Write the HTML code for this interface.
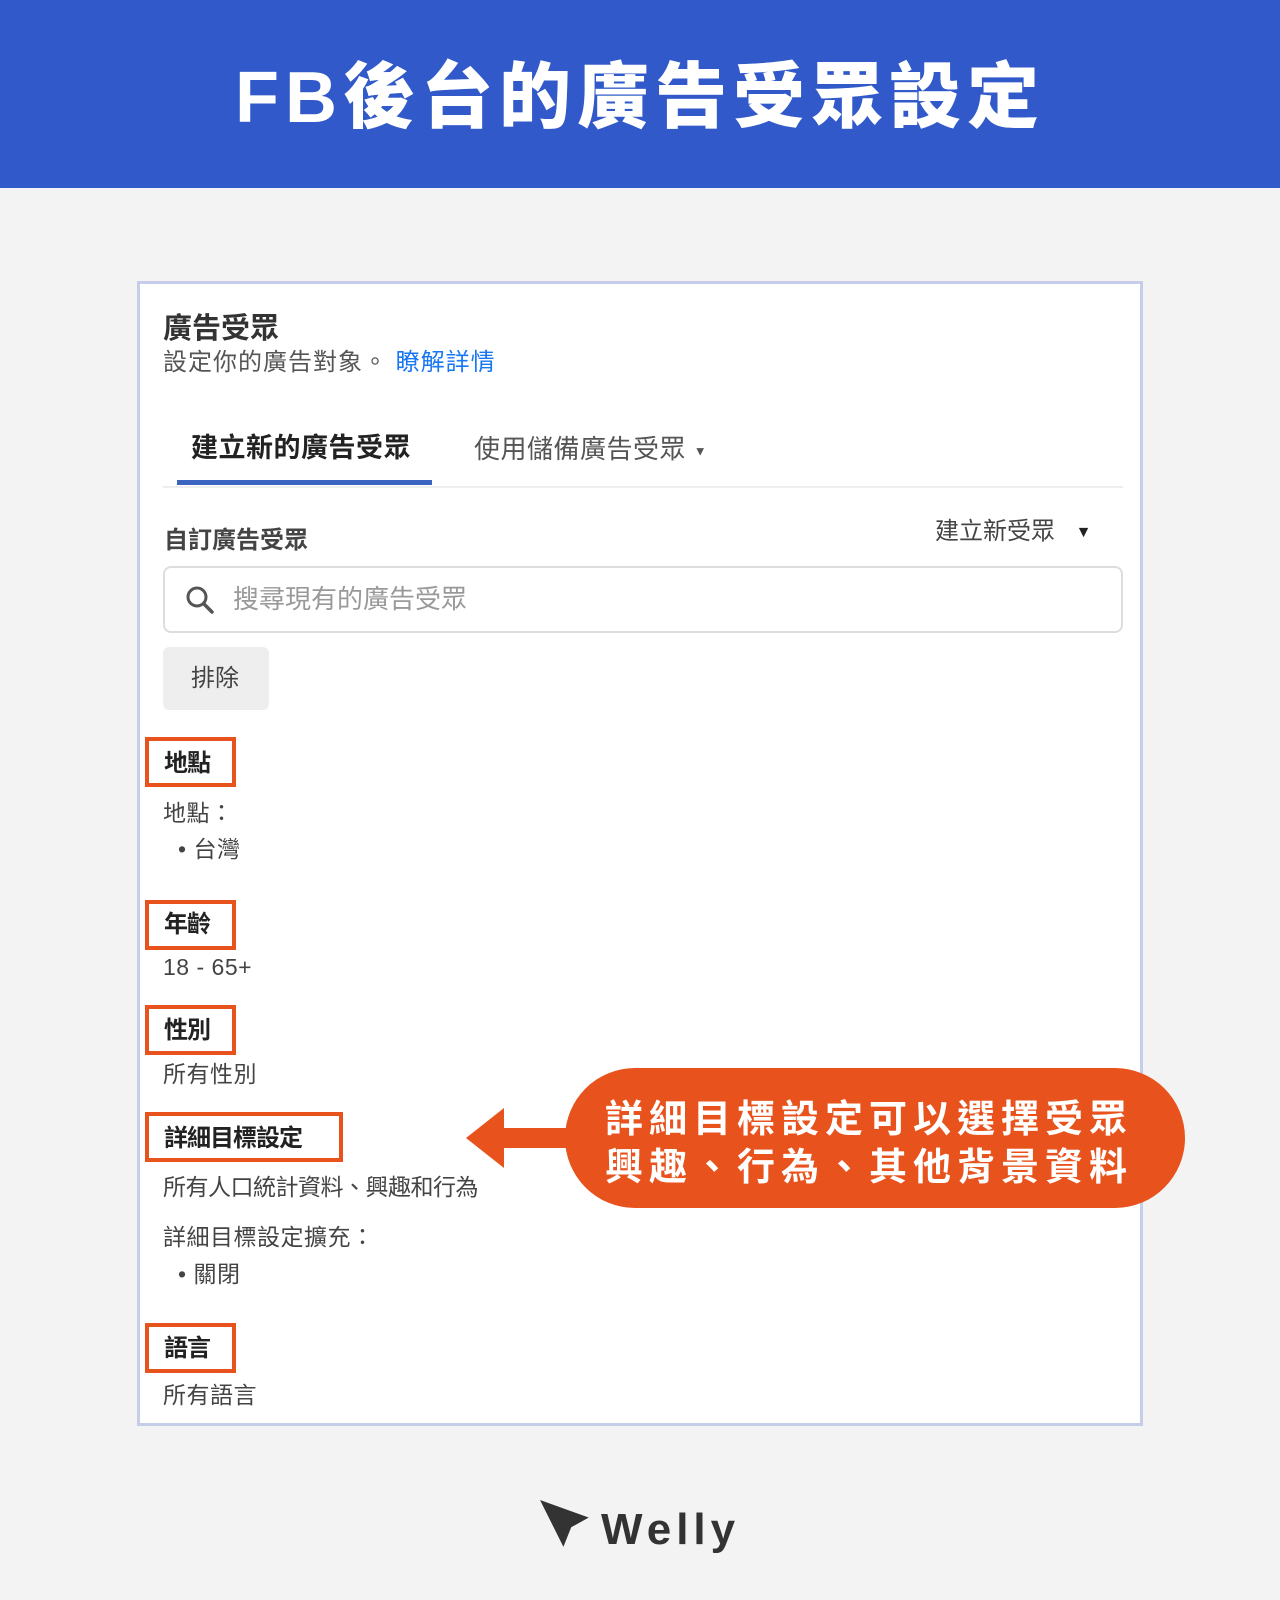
<!DOCTYPE html>
<html><head><meta charset="utf-8"><style>
*{margin:0;padding:0;box-sizing:border-box}
body{width:1280px;height:1600px;background:#f3f3f3;position:relative;overflow:hidden;font-family:"Liberation Sans","Noto Sans CJK TC",sans-serif;color:#333}
.a{position:absolute;white-space:nowrap;line-height:1}
.hdr{position:absolute;left:0;top:0;width:1280px;height:188px;background:#3159c9}
.card{position:absolute;left:137px;top:281px;width:1006px;height:1145px;background:#fff;border:3px solid #c5cde8}
.box{position:absolute;border:4px solid #e8521c;height:50px}
.lbl{font-size:24px;font-weight:bold;color:#222;letter-spacing:-1px}
.t{font-size:23px;color:#444;letter-spacing:0.5px}
</style></head><body>
<div class="hdr"></div>
<div class="a" style="left:0;width:1280px;text-align:center;top:62px;font-size:72px;font-weight:900;color:#fff;letter-spacing:6px">FB後台的廣告受眾設定</div>
<div class="card"></div>
<div class="a" style="left:163px;top:315px;font-size:29px;font-weight:bold;color:#333">廣告受眾</div>
<div class="a" style="left:163px;top:351px;font-size:24px;color:#555;letter-spacing:1px">設定你的廣告對象。 <span style="color:#1877f2">瞭解詳情</span></div>
<div class="a" style="left:191px;top:435px;font-size:27px;font-weight:bold;color:#222;letter-spacing:0.5px">建立新的廣告受眾</div>
<div class="a" style="left:474px;top:436px;font-size:26px;color:#555;letter-spacing:0.5px">使用儲備廣告受眾 <span style="font-size:13px;vertical-align:middle">▼</span></div>
<div style="position:absolute;left:163px;top:486px;width:960px;height:2px;background:#eee"></div>
<div style="position:absolute;left:177px;top:480px;width:255px;height:5px;background:#3b64c0"></div>
<div class="a" style="left:164px;top:529px;font-size:24px;font-weight:bold;color:#444">自訂廣告受眾</div>
<div class="a" style="left:935px;top:520px;font-size:24px;color:#444">建立新受眾 <span style="font-size:16px;margin-left:14px;vertical-align:middle;color:#222">▼</span></div>
<div style="position:absolute;left:163px;top:566px;width:960px;height:67px;border:2px solid #ddd;border-radius:8px"></div>
<svg style="position:absolute;left:184px;top:584px" width="32" height="32" viewBox="0 0 32 32"><circle cx="13" cy="13" r="9" fill="none" stroke="#555" stroke-width="3"/><path d="M20 20l8 8" stroke="#555" stroke-width="3.5" stroke-linecap="round"/></svg>
<div class="a" style="left:233px;top:586px;font-size:26px;color:#999">搜尋現有的廣告受眾</div>
<div style="position:absolute;left:163px;top:647px;width:106px;height:63px;background:#eee;border-radius:6px"></div>
<div class="a" style="left:191px;top:667px;font-size:24px;color:#444">排除</div>
<div class="box" style="left:145px;top:737px;width:91px"></div>
<div class="a lbl" style="left:164px;top:752px">地點</div>
<div class="a t" style="left:163px;top:802px">地點：</div>
<div class="a t" style="left:178px;top:838px">• 台灣</div>
<div class="box" style="left:145px;top:900px;width:91px"></div>
<div class="a lbl" style="left:164px;top:913px">年齡</div>
<div class="a t" style="left:163px;top:956px">18 - 65+</div>
<div class="box" style="left:145px;top:1005px;width:91px"></div>
<div class="a lbl" style="left:164px;top:1019px">性別</div>
<div class="a t" style="left:163px;top:1063px">所有性別</div>
<div class="box" style="left:145px;top:1112px;width:198px"></div>
<div class="a lbl" style="left:164px;top:1127px">詳細目標設定</div>
<div class="a t" style="left:163px;top:1176px;letter-spacing:-0.5px">所有人口統計資料、興趣和行為</div>
<div class="a t" style="left:163px;top:1226px">詳細目標設定擴充：</div>
<div class="a t" style="left:178px;top:1263px">• 關閉</div>
<div class="box" style="left:145px;top:1323px;width:91px"></div>
<div class="a lbl" style="left:164px;top:1337px">語言</div>
<div class="a t" style="left:163px;top:1384px">所有語言</div>
<svg style="position:absolute;left:460px;top:1100px" width="120" height="76" viewBox="0 0 120 76"><path d="M6 38 L44 8 L44 28 L118 28 L118 48 L44 48 L44 68 Z" fill="#e8521c"/></svg>
<div style="position:absolute;left:565px;top:1068px;width:620px;height:140px;background:#e8521c;border-radius:70px"></div>
<div class="a" style="left:605px;top:1096px;font-size:38px;font-weight:bold;color:#fff;letter-spacing:6px;line-height:48px">詳細目標設定可以選擇受眾<br>興趣、行為、其他背景資料</div>
<svg style="position:absolute;left:538px;top:1498px" width="56" height="52" viewBox="0 0 56 52"><path d="M2 2 L52 20 L34 30 L26 50 Z" fill="#333"/><path d="M26 50 L34 30 L52 20" fill="none" stroke="#f3f3f3" stroke-width="2"/></svg>
<div class="a" style="left:601px;top:1508px;font-size:44px;font-weight:bold;color:#333;letter-spacing:5px">Welly</div>
</body></html>
